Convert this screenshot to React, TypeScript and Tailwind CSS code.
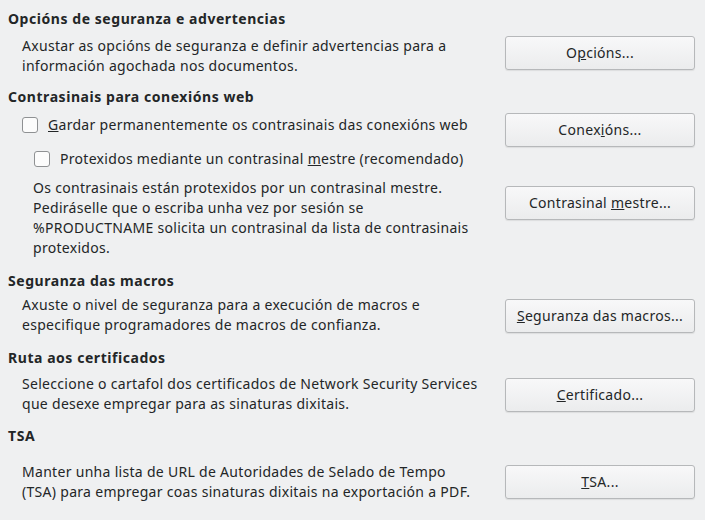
import type { ReactNode } from 'react';

function Btn({ children, className = '' }: { children: ReactNode; className?: string }) {
  return (
    <div
      className={`w-[190px] h-[34px] shrink-0 flex items-center justify-center rounded-[3px] border border-[#b6b8ba] bg-gradient-to-b from-[#f8f8f9] to-[#ebeced] shadow-[0_1px_1px_rgba(0,0,0,0.08)] ${className}`}
    >
      <span>{children}</span>
    </div>
  );
}

function Check({ children, className = '' }: { children: ReactNode; className?: string }) {
  return (
    <div className={`flex items-center gap-[10px] ${className}`}>
      <span className="w-4 h-4 rounded-[3px] border border-[#8f9193] bg-[#fcfcfc]" />
      <span>{children}</span>
    </div>
  );
}

function Heading({ children, className = '' }: { children: ReactNode; className?: string }) {
  return <h2 className={`font-bold tracking-[0.55px] ${className}`}>{children}</h2>;
}

export default function App() {
  return (
    <div className="w-[705px] h-[520px] overflow-hidden bg-[#eff0f1] text-[#232627] font-['Noto_Sans',sans-serif] text-[14px] leading-[20px] tracking-[0.3px] pl-2 pr-[10px] pt-[9px]">
      <Heading>Opcións de seguranza e advertencias</Heading>
      <div className="mt-[6px] flex justify-between items-start">
        <p className="pl-[14px] pt-[1px]">
          Axustar as opcións de seguranza e definir advertencias para a
          <br />
          información agochada nos documentos.
        </p>
        <Btn className="mt-[1px]">
          O<u>p</u>cións...
        </Btn>
      </div>

      <Heading className="mt-[11px]">Contrasinais para conexións web</Heading>
      <div className="mt-[6px] flex justify-between items-start">
        <Check className="pl-[14px] pt-[2px]">
          <u>G</u>ardar permanentemente os contrasinais das conexións web
        </Check>
        <Btn>
          Conex<u>i</u>óns...
        </Btn>
      </div>
      <Check className="mt-[2px] pl-[26px]">
        Protexidos mediante un contrasinal <u>m</u>estre (recomendado)
      </Check>
      <div className="mt-[9px] flex justify-between items-start">
        <p className="pl-[25px]">
          Os contrasinais están protexidos por un contrasinal mestre.
          <br />
          Pediráselle que o escriba unha vez por sesión se
          <br />
          %PRODUCTNAME solicita un contrasinal da lista de contrasinais
          <br />
          protexidos.
        </p>
        <Btn className="mt-[8px]">
          Contrasinal <u>m</u>estre...
        </Btn>
      </div>

      <Heading className="mt-[13px]">Seguranza das macros</Heading>
      <div className="mt-[4px] flex justify-between items-start">
        <p className="pl-[14px]">
          Axuste o nivel de seguranza para a execución de macros e
          <br />
          especifique programadores de macros de confianza.
        </p>
        <Btn className="mt-[4px]">
          <u>S</u>eguranza das macros...
        </Btn>
      </div>

      <Heading className="mt-[13px]">Ruta aos certificados</Heading>
      <div className="mt-[6px] flex justify-between items-start">
        <p className="pl-[14px]">
          Seleccione o cartafol dos certificados de Network Security Services
          <br />
          que desexe empregar para as sinaturas dixitais.
        </p>
        <Btn className="mt-[4px]">
          <u>C</u>ertificado...
        </Btn>
      </div>

      <Heading className="mt-[12px]">TSA</Heading>
      <div className="mt-[16px] flex justify-between items-start">
        <p className="pl-[14px]">
          Manter unha lista de URL de Autoridades de Selado de Tempo
          <br />
          (TSA) para empregar coas sinaturas dixitais na exportación a PDF.
        </p>
        <Btn className="mt-[3px]">
          <u>T</u>SA...
        </Btn>
      </div>
    </div>
  );
}
